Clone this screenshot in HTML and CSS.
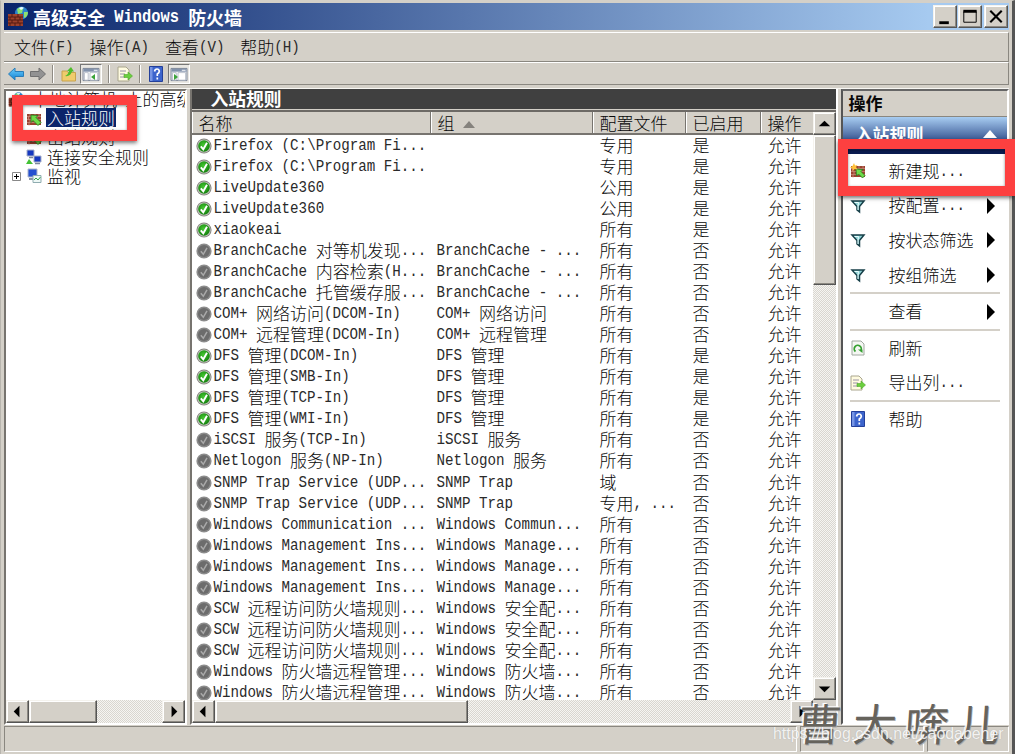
FILE: index.html
```html
<!DOCTYPE html>
<html lang="zh-CN">
<head>
<meta charset="utf-8">
<title>高级安全 Windows 防火墙</title>
<link rel="stylesheet" href="styles.css">
</head>
<body>
<svg width="0" height="0" class="defs">
  <defs>
    <linearGradient id="gb" x1="0" y1="0" x2="0" y2="1"><stop offset="0" stop-color="#6fd0ff"/><stop offset="1" stop-color="#0f7fd0"/></linearGradient>
    <radialGradient id="gg" cx=".45" cy=".4" r=".6"><stop offset="0" stop-color="#46c832"/><stop offset="1" stop-color="#12800c"/></radialGradient>
    <symbol id="wall" viewBox="0 0 16 16">
      <path d="M1 3h14v11H1z" fill="#9b4230"/>
      <path d="M1 5.5h14M1 8.5h14M1 11.5h14M4 3v2.500M9 3v2.500M13 3v2.500M2.500 5.500v3M7 5.500v3M11 5.500v3M4 8.500v3M9 8.500v3M3 11.500v3" stroke="#c98a78" stroke-width=".8" fill="none"/>
    </symbol>
    <symbol id="wall-in" viewBox="0 0 16 16"><use href="#wall"/><path d="M5 4l7 .5-2 2 5 5-3 3-5-5-2 2z" fill="#6edb4a" stroke="#237a1e" stroke-width=".8"/></symbol>
    <symbol id="wall-new" viewBox="0 0 16 16"><use href="#wall"/><path d="M6 6l7 .5-2 2 4 4-2.500 2.500-4-4-2 2z" fill="#6edb4a" stroke="#237a1e" stroke-width=".8"/><path d="M4 0l1 2.500 2.500-.5L6 4l1.500 2.500L4.500 6 3 8 2.500 5.500 0 4.500 2.500 3z" fill="#ffc23a"/></symbol>
    <symbol id="firewall" viewBox="0 0 22 22">
      <circle cx="14.500" cy="7" r="6.500" fill="#2c83cc"/><path d="M10 3q3-3 6 0l-1 4-4 1zM17 6l4 0q0 5-4 6z" fill="#8ce070"/><path d="M12 2q3-2 5 0l-3 2z" fill="#e8fbff"/>
      <path d="M1 8h15v12H1z" fill="#9d412c"/><path d="M1 11h15M1 14h15M1 17h15M5 8v3M11 8v3M3 11v3M8 11v3M13 11v3M5 14v3M11 14v3M3 17v3M8 17v3M13 17v3" stroke="#551a12" fill="none"/>
    </symbol>
    <symbol id="on" viewBox="0 0 16 16"><circle cx="8" cy="8" r="7.600" fill="#85857f"/><circle cx="8" cy="8" r="6.600" fill="#c8c8c4"/><circle cx="8" cy="8" r="5.800" fill="url(#gg)"/><path d="M4.800 8.300l2.500 3 3.700-6.500" fill="none" stroke="#fff" stroke-width="1.900"/></symbol>
    <symbol id="off" viewBox="0 0 16 16"><circle cx="8" cy="8" r="7.600" fill="#8c8c8c"/><circle cx="8" cy="8" r="6" fill="#6c6c6c"/><path d="M4.800 8.300l2.500 3 3.700-6.500" fill="none" stroke="#a9a9a9" stroke-width="1.500"/></symbol>
    <symbol id="filter" viewBox="0 0 16 16"><path d="M2 3h12L9.500 8.500V14L7 12V8.500z" fill="#8fd3d6" stroke="#173f48" stroke-width="1.500"/><path d="M4.500 4.500h4L8 8v4" fill="none" stroke="#e9ffff"/></symbol>
    <symbol id="export" viewBox="0 0 16 16"><path d="M1 1h8l3 3v11H1z" fill="#fffbe0" stroke="#aaa68e"/><path d="M3 5h6M3 8h5M3 11h5" stroke="#9a92a8"/><path d="M7 8.500h4V6l4.500 4L11 14v-2.500H7z" fill="#6bcf3e" stroke="#4ba628" stroke-width=".6"/></symbol>
    <symbol id="refresh" viewBox="0 0 16 16"><path d="M2 1h9l3 3v11H2z" fill="#f5f7f3" stroke="#a0a8a0"/><path d="M5.500 11.500A3.500 3.500 0 1 1 10.500 11" fill="none" stroke="#35a030" stroke-width="1.800"/><path d="M8 9.500h4.500V13z" fill="#35a030"/></symbol>
    <symbol id="help" viewBox="0 0 16 16"><path d="M1.500.5h13v15h-13z" fill="#3c64cc" stroke="#24409a"/><path d="M2 1h2.500v14H2z" fill="#7795e4"/><path d="M6.500 5.500Q7 3 9 3t2.300 2.200Q11.300 6.800 9.300 8v2M9.300 11.500v2" stroke="#fff" stroke-width="1.700" fill="none"/></symbol>
    <symbol id="console" viewBox="0 0 18 16"><path d="M.5 1.500h17v13H.5z" fill="#f5f6f8" stroke="#727d90"/><path d="M1 2h16v3H1z" fill="#8292ac"/><path d="M12 3.500h4" stroke="#fff"/><path d="M2 6h4v8H2zM8 6h8v8H8z" fill="#fff" stroke="#a0a8b7" stroke-width=".7"/></symbol>
    <symbol id="pcs" viewBox="0 0 16 16"><path d="M1 1h7v6H1z" fill="#1538c0" stroke="#a8b0c8"/><path d="M8 7h7v6H8z" fill="#1538c0" stroke="#a8b0c8"/><path d="M3 8.500h4M9 14.500h5" stroke="#7b879d" stroke-width="1.500"/><path d="M0 15l3-5 4 5z" fill="#43c236"/></symbol>
    <symbol id="monitor" viewBox="0 0 16 16"><path d="M2 1h9v8H2z" fill="#2450d0" stroke="#aeb6cc"/><path d="M3 11h6" stroke="#8893a8" stroke-width="2"/><path d="M7 7.500h8v7H7z" fill="#eef8f6" stroke="#8facb0"/><path d="M8 12l2-2 2 2 2.500-3" fill="none" stroke="#34a74c"/></symbol>
  </defs>
</svg>
<div class="window">
  <header class="title"><svg class="logo"><use href="#firewall"/></svg><h1 class="mix">高级安全 Windows 防火墙</h1>
    <div class="winbtns">
      <span class="btn"><svg viewBox="0 0 22 22"><path d="M5 16h10v3H5z"/></svg></span>
      <span class="btn"><svg viewBox="0 0 22 22"><path d="M4.500 6h13v11h-13z" fill="none" stroke="#000"/><path d="M4 4h14v3H4z"/></svg></span>
      <span class="btn gap"><svg viewBox="0 0 22 22"><path d="M5 5l12 12M17 5L5 17" stroke="#000" stroke-width="2.200"/></svg></span>
    </div>
  </header>
  <nav class="menu"><span class="mix">文件(F)</span><span class="mix">操作(A)</span><span class="mix">查看(V)</span><span class="mix">帮助(H)</span></nav>
  <div class="tools">
    <svg class="ic" viewBox="0 0 16 16"><path d="M.5 8L7 2v3.500h8.500v5H7V14z" fill="url(#gb)" stroke="#2a7db8"/></svg>
    <svg class="ic ml" viewBox="0 0 16 16"><path d="M15.500 8L9 2v3.500H.5v5H9V14z" fill="#929292" stroke="#707070"/></svg>
    <i class="bar"></i>
    <svg class="ic" viewBox="0 0 16 16"><path d="M1 5h5l1 1.500h7.500V15H1z" fill="#f0cc6c" stroke="#c8a24c"/><path d="M4 10q3-1 4-5H6l4-4 3 4.500h-2Q9 11 4 10z" fill="#50bd2b"/></svg>
    <span class="pressed"><svg><use href="#console"/><path d="M13 7v6l-4-3z" fill="#3ba33a"/></svg></span>
    <i class="bar"></i><svg class="ic"><use href="#export"/></svg><i class="bar"></i><svg class="ic"><use href="#help"/></svg>
    <span class="pressed last"><svg><use href="#console"/><path d="M4 7v6l4-3z" fill="#3ba33a"/></svg></span>
  </div>
  <main class="panes">
    <section class="tree">
      <ul>
        <li class="root"><svg class="ic"><use href="#firewall"/></svg><span class="mix">本地计算机 上的高级</span></li>
        <li><svg class="ic"><use href="#wall-in"/></svg><span class="sel">入站规则</span></li>
        <li><svg class="ic"><use href="#wall-in"/></svg><span>出站规则</span></li>
        <li><svg class="ic"><use href="#pcs"/></svg><span>连接安全规则</span></li>
        <li class="exp"><svg class="plus" viewBox="0 0 9 9"><path d="M.5.5h8v8h-8z" fill="#fff" stroke="#888"/><path d="M2 4.500h5M4.500 2v5" stroke="#000"/></svg><svg class="ic"><use href="#monitor"/></svg><span>监视</span></li>
      </ul>
      <div class="hs"><span class="btn sb"><svg viewBox="0 0 22 22"><path d="M13 5v12l-6-6z"/></svg></span><span class="btn thumb"></span><i class="fill"></i><span class="btn sb"><svg viewBox="0 0 22 22"><path d="M9 5v12l6-6z"/></svg></span></div>
    </section>
    <section class="list">
      <h2>入站规则</h2>
      <div class="grid">
        <div class="cols">
          <div class="row head"><span>名称</span><span>组<i class="sort"></i></span><span>配置文件</span><span>已启用</span><span>操作</span></div>
          <div class="rows" id="rows"></div>
        </div>
        <div class="vs"><span class="btn sb"><svg viewBox="0 0 22 22"><path d="M5 14h12l-6-6z"/></svg></span><span class="btn vthumb"></span><i class="fill"></i><span class="btn sb"><svg viewBox="0 0 22 22"><path d="M5 9h12l-6 6z"/></svg></span></div>
      </div>
      <div class="hs"><span class="btn sb"><svg viewBox="0 0 22 22"><path d="M13 5v12l-6-6z"/></svg></span><span class="btn thumb wide"></span><i class="fill"></i><span class="btn sb"><svg viewBox="0 0 22 22"><path d="M9 5v12l6-6z"/></svg></span><i class="corner"></i></div>
    </section>
    <section class="actions">
      <h2>操作</h2>
      <h3>入站规则<i class="up"></i></h3>
      <ul>
        <li><svg class="ic"><use href="#wall-new"/></svg><span class="label mix">新建规...</span></li>
        <li><svg class="ic"><use href="#filter"/></svg><span class="label mix">按配置...</span><i class="sub"></i></li>
        <li><svg class="ic"><use href="#filter"/></svg><span class="label">按状态筛选</span><i class="sub"></i></li>
        <li><svg class="ic"><use href="#filter"/></svg><span class="label">按组筛选</span><i class="sub"></i></li>
        <li class="line"><svg class="ic"></svg><span class="label">查看</span><i class="sub"></i></li>
        <li class="line"><svg class="ic"><use href="#refresh"/></svg><span class="label">刷新</span></li>
        <li><svg class="ic"><use href="#export"/></svg><span class="label mix">导出列...</span></li>
        <li class="line"><svg class="ic"><use href="#help"/></svg><span class="label">帮助</span></li>
      </ul>
    </section>
  </main>
  <footer class="status"><span></span><span></span><span></span></footer>
</div>
<div class="mark left"></div>
<div class="mark right"></div>
<div class="brush"><span>曹</span><span>大</span><span>喯</span><span>儿</span></div>
<div class="url">https://blog.csdn.net/caodabener</div>
<script src="app.js"></script>
</body>
</html>
```
FILE: styles.css
```css
* { box-sizing: border-box; }
body { margin: 0; width: 1015px; height: 754px; overflow: hidden; position: relative; background: #d4d0c8; color: #080808; font: 300 17px/20px "Noto Sans CJK SC", sans-serif; }
h1, h2, h3, ul { margin: 0; padding: 0; font-size: 17px; list-style: none; }
svg { display: block; flex: none; }
.defs { position: absolute; }
.mix { display: flex; align-items: center; white-space: pre; }
.en { font: 14.2px/20px "Liberation Mono", monospace; white-space: pre; transform: scaleY(1.14); color: #2a2a2a; }
.ic { width: 16px; height: 16px; }
.window { height: 754px; display: flex; flex-direction: column; padding: 3px 3px 0; border-left: 1px solid #b8b5ae; border-right: 3px solid #555; border-top: 1px solid #d4d0c8; }
.title { height: 27px; margin-top: -1px; display: flex; align-items: center; background: linear-gradient(90deg, #0a246a, #a6caf0 92%); color: #fff; padding: 0 1px 0 3px; flex: none; }
.title h1 { flex: 1; margin-left: 4px; font-weight: 700; font-size: 18px; }
.title .en { font-weight: 700; font-size: 15.4px; color: #fff; }
.logo { width: 22px; height: 22px; }
.winbtns { display: flex; gap: 1px; }
.btn { display: block; flex: none; background: #d4d0c8; border: 1px solid; border-color: #f5f3ee #555 #555 #f5f3ee; box-shadow: inset -1px -1px #8c8982, inset 1px 1px #fff; }
.winbtns .btn { width: 24px; height: 23px; }
.winbtns .gap { margin-left: 1px; }
.btn svg { width: 100%; height: 100%; }
.menu, .tools { display: flex; align-items: center; flex: none; border-top: 1px solid #fff; border-bottom: 1px solid #8a8780; border-right: 1px solid #8a8780; }
.menu { margin-top: 2px; height: 30px; padding-left: 10px; gap: 15.9px; }
.tools { height: 23px; padding-left: 4px; }
.ml { margin-left: 6px; }
.bar { width: 2px; height: 18px; margin: 0 7px 0 6px; border-left: 1px solid #8f8b84; border-right: 1px solid #fff; }
.pressed { width: 22px; height: 20px; margin-left: 3px; padding: 2px 1px; background: #e9e7e2; border: 1px solid; border-color: #777 #fff #fff #777; }
.pressed.last { margin-left: 4px; }
.pressed svg { width: 18px; height: 15px; }
.panes { flex: none; height: 637px; margin-top: 3px; display: flex; border-top: 1px solid #f8f7f3; }
.tree { width: 184px; height: 636px; border: 2px solid; border-color: #77746f #fff #fff #77746f; background: #fff; display: flex; flex-direction: column; margin-right: 3px; overflow: hidden; }
.tree ul { flex: 1; margin-top: -1px; }
.tree li { height: 19.2px; display: flex; align-items: center; padding-left: 20px; white-space: nowrap; gap: 4px; }
.tree li > span { line-height: 19px; margin-top: -2px; }
.tree li.root { padding-left: 2px; gap: 7px; }
.tree li.exp { padding-left: 6px; gap: 0; }
.plus { width: 9px; height: 9px; margin-right: 5px; }
.exp .ic { margin-right: 4px; }
.tree li > span { padding: 0 1px; }
.sel { background: #0a246a; color: #fff; }
.hs { display: flex; height: 23px; flex: none; }
.sb { width: 23px; height: 23px; }
.thumb { width: 68px; }
.thumb.wide { width: 253px; }
.fill { flex: 1; background: conic-gradient(#d9d6d0 25%, #f6f5f2 0 50%, #d9d6d0 0 75%, #f6f5f2 0) 0 0 / 2px 2px; }
.corner { width: 23px; background: #d4d0c8; }
.list { width: 648px; height: 636px; display: flex; flex-direction: column; border: 2px solid; border-top: 0; border-color: #77746f #fff #fff #77746f; }
.list h2 { height: 20px; line-height: 19px; padding-left: 18px; background: #404040; color: #fff; font-weight: 700; font-size: 17.8px; flex: none; }
.grid { flex: 1; min-height: 0; display: flex; margin-top: 1px; border-top: 2px solid #6d6a66; background: #fff; }
.cols { flex: 1; overflow: hidden; display: flex; flex-direction: column; }
.row { display: grid; grid-template-columns: 239px 162px 93px 75px 53px; height: 21.04px; white-space: pre; align-items: center; }
.head { height: 23px; flex: none; background: #d4d0c8; border-bottom: 2px solid #77746f; align-items: stretch; }
.head > span { padding-left: 5px; line-height: 21px; border-right: 1px solid #77746f; border-left: 1px solid #fff; }
.head > span:last-child { border-right: 0; }
.sort { display: inline-block; margin-left: 9px; border: 6px solid transparent; border-top: 0; border-bottom: 7px solid #85827d; vertical-align: 2px; }
.rows { flex: 1; overflow: hidden; }
.c { padding-left: 5px; height: 20px; display: flex; align-items: center; }
.c:nth-child(n+3) { padding-left: 6px; }
.c:first-child { padding-left: 4px; gap: 1px; }
.c > .mix { margin-top: -1px; }
.c .ic { margin-top: 1px; }
.vs { width: 23px; display: flex; flex-direction: column; }
.vthumb { height: 150px; }
.actions { margin-left: 3px; width: 168px; height: 636px; background: #fff; border: 2px solid; border-color: #666 #fff #fff #555; }
.actions h2 { height: 26px; line-height: 24px; background: #d4d0c8; padding-left: 5px; border-bottom: 1px solid #8a8780; }
.actions h3 { height: 37px; line-height: 36px; padding-left: 12px; color: #fff; display: flex; align-items: center; justify-content: space-between; background: linear-gradient(#a8cdf2, #0a246a); border-bottom: 4px solid #0a1b50; }
.up { margin: 0 10px 0 0; border: 7px solid transparent; border-top: 0; border-bottom: 8px solid #fff; }
.actions li { height: 34.6px; display: flex; align-items: center; padding-left: 7px; white-space: nowrap; }
.label { margin-left: 22px; margin-top: -1px; }
.actions .line { height: 36.6px; background: linear-gradient(#d4d0c8, #d4d0c8) 7px 0 / 150px 2px no-repeat; padding-top: 2px; }
.sub { margin: 0 12px 0 auto; border: 8px solid transparent; border-right: 0; border-left-color: #000; }
.status { height: 26px; margin-top: 1px; display: flex; gap: 3px; flex: none; }
.status span { border: 1px solid; border-color: #8a8780 #fff #fff #8a8780; width: 82px; }
.status span:first-child { width: 797px; }
.status span:nth-child(2) { width: 125px; }
.mark { position: absolute; border: 10px solid #fd4040; box-shadow: 0 2px 4px #0008, inset 0 1px 3px #0007; }
.mark.left { left: 12px; top: 95px; width: 125px; height: 46px; border-width: 10px 10px 11px 11px; }
.mark.right { left: 838px; top: 139px; width: 177px; height: 57px; }
.brush { position: absolute; left: 798px; top: 697px; display: grid; grid-template-columns: 55px 52px 51px 46px; font: 400 44px/50px "Noto Sans CJK SC", sans-serif; color: #66635c; text-shadow: -1px -1px #fff, -2px -1px #fffb, 1px 1px #aaa; }
.brush span { transform: skewX(-4deg); }
.url { position: absolute; left: 773px; top: 725px; font: 15.9px/18px "Liberation Sans", sans-serif; color: #fffd; text-shadow: 0 0 1px #8889; }
```
FILE: app.js
```js
const rules = [
  ['Firefox (C:\\Program Fi...', '', '专用', 1],
  ['Firefox (C:\\Program Fi...', '', '专用', 1],
  ['LiveUpdate360', '', '公用', 1],
  ['LiveUpdate360', '', '公用', 1],
  ['xiaokeai', '', '所有', 1],
  ['BranchCache 对等机发现...', 'BranchCache - ...', '所有', 0],
  ['BranchCache 内容检索(H...', 'BranchCache - ...', '所有', 0],
  ['BranchCache 托管缓存服...', 'BranchCache - ...', '所有', 0],
  ['COM+ 网络访问(DCOM-In)', 'COM+ 网络访问', '所有', 0],
  ['COM+ 远程管理(DCOM-In)', 'COM+ 远程管理', '所有', 0],
  ['DFS 管理(DCOM-In)', 'DFS 管理', '所有', 1],
  ['DFS 管理(SMB-In)', 'DFS 管理', '所有', 1],
  ['DFS 管理(TCP-In)', 'DFS 管理', '所有', 1],
  ['DFS 管理(WMI-In)', 'DFS 管理', '所有', 1],
  ['iSCSI 服务(TCP-In)', 'iSCSI 服务', '所有', 0],
  ['Netlogon 服务(NP-In)', 'Netlogon 服务', '所有', 0],
  ['SNMP Trap Service (UDP...', 'SNMP Trap', '域', 0],
  ['SNMP Trap Service (UDP...', 'SNMP Trap', '专用, ...', 0],
  ['Windows Communication ...', 'Windows Commun...', '所有', 0],
  ['Windows Management Ins...', 'Windows Manage...', '所有', 0],
  ['Windows Management Ins...', 'Windows Manage...', '所有', 0],
  ['Windows Management Ins...', 'Windows Manage...', '所有', 0],
  ['SCW 远程访问防火墙规则...', 'Windows 安全配...', '所有', 0],
  ['SCW 远程访问防火墙规则...', 'Windows 安全配...', '所有', 0],
  ['SCW 远程访问防火墙规则...', 'Windows 安全配...', '所有', 0],
  ['Windows 防火墙远程管理...', 'Windows 防火墙...', '所有', 0],
  ['Windows 防火墙远程管理...', 'Windows 防火墙...', '所有', 0]
];

// Latin runs use a half-width monospace face beside full-width Chinese.
const mix = s => s.replace(/[\x20-\x7e]+/g, m => `<span class="en">${m}</span>`);

document.querySelectorAll('.mix').forEach(el => { el.innerHTML = mix(el.textContent); });

const cell = s => `<span class="c"><span class="mix">${mix(s)}</span></span>`;

document.getElementById('rows').innerHTML = rules.map(([name, group, profile, on]) => `
<div class="row"><span class="c"><svg class="ic"><use href="#${on ? 'on' : 'off'}"/></svg><span class="mix">${mix(name)}</span></span>${cell(group)}${cell(profile)}${cell(on ? '是' : '否')}${cell('允许')}</div>`).join('');
```
